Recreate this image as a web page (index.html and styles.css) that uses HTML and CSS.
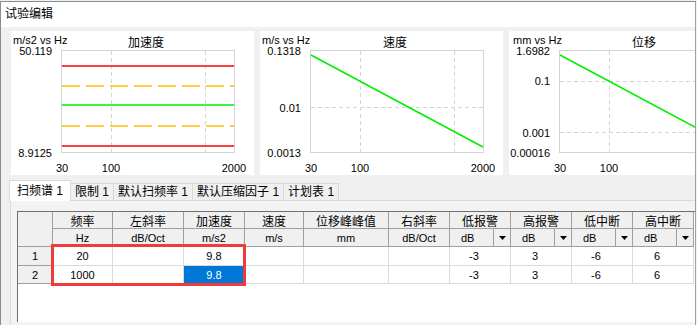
FILE: index.html
```html
<!DOCTYPE html>
<html lang="zh-CN">
<head>
    <meta charset="UTF-8">
    <meta name="viewport" content="width=device-width, initial-scale=1.0">
    <title>试验编辑</title>
    <link rel="stylesheet" href="styles.css">
</head>
<body>
<div class="window">
    <div class="titlebar">试验编辑</div>

    <div class="charts">
        <div class="chart">
            <svg width="243" height="144" viewBox="0 0 243 144">
                <text class="unit" x="2" y="13">m/s2 vs Hz</text>
                <text class="ttl" x="135" y="16">加速度</text>
                <rect class="frame" x="50.5" y="19.5" width="173" height="102"/>
                <line class="grid" x1="100.5" y1="20" x2="100.5" y2="121"/>
                <line class="grid" x1="194.5" y1="20" x2="194.5" y2="121"/>
                <line class="red" x1="51" y1="35" x2="223" y2="35"/>
                <line class="orange" x1="51" y1="55" x2="223" y2="55"/>
                <line class="green" x1="51" y1="74" x2="223" y2="74"/>
                <line class="orange" x1="51" y1="95" x2="223" y2="95"/>
                <line class="red" x1="51" y1="115" x2="223" y2="115"/>
                <text class="yl" x="41" y="24">50.119</text>
                <text class="yl" x="41" y="126">8.9125</text>
                <text class="xl" x="51" y="141">30</text>
                <text class="xl" x="100" y="141">100</text>
                <text class="xl" x="223" y="141">2000</text>
            </svg>
        </div>
        <div class="chart">
            <svg width="243" height="144" viewBox="0 0 243 144">
                <text class="unit" x="2" y="13">m/s vs Hz</text>
                <text class="ttl" x="135" y="16">速度</text>
                <rect class="frame" x="50.5" y="19.5" width="173" height="102"/>
                <line class="grid" x1="100.5" y1="20" x2="100.5" y2="121"/>
                <line class="grid" x1="194.5" y1="20" x2="194.5" y2="121"/>
                <line class="grid" x1="51" y1="76.5" x2="223" y2="76.5"/>
                <line class="curve" x1="51" y1="24" x2="223" y2="116"/>
                <text class="yl" x="41" y="24">0.1318</text>
                <text class="yl" x="41" y="81">0.01</text>
                <text class="yl" x="41" y="126">0.0013</text>
                <text class="xl" x="51" y="141">30</text>
                <text class="xl" x="100" y="141">100</text>
                <text class="xl" x="223" y="141">2000</text>
            </svg>
        </div>
        <div class="chart">
            <svg width="243" height="144" viewBox="0 0 243 144">
                <text class="unit" x="4" y="13">mm vs Hz</text>
                <text class="ttl" x="135" y="16">位移</text>
                <rect class="frame" x="50.5" y="19.5" width="173" height="102"/>
                <line class="grid" x1="100.5" y1="20" x2="100.5" y2="121"/>
                <line class="grid" x1="194.5" y1="20" x2="194.5" y2="121"/>
                <line class="grid" x1="51" y1="50.5" x2="223" y2="50.5"/>
                <line class="grid" x1="51" y1="101.5" x2="223" y2="101.5"/>
                <line class="curve" x1="51" y1="24" x2="223" y2="116"/>
                <text class="yl" x="41" y="24">1.6982</text>
                <text class="yl" x="41" y="54">0.1</text>
                <text class="yl" x="41" y="106">0.001</text>
                <text class="yl" x="41" y="126">0.00016</text>
                <text class="xl" x="51" y="141">30</text>
                <text class="xl" x="100" y="141">100</text>
            </svg>
        </div>
    </div>

    <div class="tab-strip">
        <div class="tab active">扫频谱 1</div>
        <div class="tab">限制 1</div>
        <div class="tab">默认扫频率 1</div>
        <div class="tab">默认压缩因子 1</div>
        <div class="tab">计划表 1</div>
    </div>
    <div class="tab-page">
        <div class="table">
            <div class="hc corner"></div>
            <div class="hc">频率</div>
            <div class="hc">左斜率</div>
            <div class="hc">加速度</div>
            <div class="hc">速度</div>
            <div class="hc">位移峰峰值</div>
            <div class="hc">右斜率</div>
            <div class="hc">低报警</div>
            <div class="hc">高报警</div>
            <div class="hc">低中断</div>
            <div class="hc">高中断</div>

            <div class="hc u">Hz</div>
            <div class="hc u">dB/Oct</div>
            <div class="hc u">m/s2</div>
            <div class="hc u">m/s</div>
            <div class="hc u">mm</div>
            <div class="hc u">dB/Oct</div>
            <div class="hc u dd"><span>dB</span><i class="dd-btn"><svg width="7" height="4"><path d="M0 0h7L3.5 4z"/></svg></i></div>
            <div class="hc u dd"><span>dB</span><i class="dd-btn"><svg width="7" height="4"><path d="M0 0h7L3.5 4z"/></svg></i></div>
            <div class="hc u dd"><span>dB</span><i class="dd-btn"><svg width="7" height="4"><path d="M0 0h7L3.5 4z"/></svg></i></div>
            <div class="hc u dd"><span>dB</span><i class="dd-btn"><svg width="7" height="4"><path d="M0 0h7L3.5 4z"/></svg></i></div>

            <div class="hc rh">1</div>
            <div class="c">20</div>
            <div class="c"></div>
            <div class="c">9.8</div>
            <div class="c"></div>
            <div class="c"></div>
            <div class="c"></div>
            <div class="c lim">-3</div>
            <div class="c lim">3</div>
            <div class="c lim">-6</div>
            <div class="c lim">6</div>

            <div class="hc rh">2</div>
            <div class="c">1000</div>
            <div class="c"></div>
            <div class="c sel">9.8</div>
            <div class="c"></div>
            <div class="c"></div>
            <div class="c"></div>
            <div class="c lim">-3</div>
            <div class="c lim">3</div>
            <div class="c lim">-6</div>
            <div class="c lim">6</div>

            <div class="mark"></div>
        </div>
    </div>
</div>
</body>
</html>
```

FILE: styles.css
```css
body { margin: 0; background: #f0f0f0; font-family: "Liberation Sans", "Noto Sans CJK SC", sans-serif; color: #000; }
.window { box-sizing: border-box; width: 696px; height: 324px; margin-top: 1px; background: #f0f0f0; border-left: 1px solid #8c8c8c; border-top: 1px solid #8c8c8c; border-right: 1px solid #a0a0a0; overflow: hidden; }
.titlebar { height: 25px; line-height: 25px; padding-left: 4px; background: #fff; font-size: 12px; }

/* charts */
.charts { display: flex; gap: 6px; padding: 4px 0 0 10px; overflow: hidden; }
.chart { flex: 0 0 243px; height: 144px; background: #fff; }
.chart svg { display: block; }
.chart text { font-family: "Liberation Sans", "Noto Sans CJK SC", sans-serif; font-size: 11px; fill: #000; }
.chart .ttl { font-size: 12px; text-anchor: middle; }
.chart .yl { text-anchor: end; }
.chart .xl { text-anchor: middle; }
.frame { fill: none; stroke: #d4d4d4; }
.grid { stroke: #d4d4d4; stroke-dasharray: 4 3; }
.red { stroke: #ff0000; stroke-width: 1.6; }
.orange { stroke: #ffc000; stroke-width: 1.6; stroke-dasharray: 18 6; }
.green { stroke: #00ee00; stroke-width: 1.6; }
.curve { stroke: #00ee00; stroke-width: 1.5; }

/* tabs */
.tab-strip { display: flex; align-items: flex-end; height: 20px; margin-top: 5px; padding-left: 8px; }
.tab { box-sizing: border-box; height: 17px; padding: 0 4px; font-size: 12px; line-height: 16px; background: #f0f0f0; border: 1px solid #d9d9d9; border-bottom: none; margin-left: -1px; white-space: nowrap; }
.tab.active { height: 21px; line-height: 20px; margin-left: 0; margin-bottom: -1px; padding: 0 7px; background: #fff; position: relative; z-index: 1; }
.tab-page { margin-left: 9px; padding: 10px 0 0 6px; height: 130px; background: #f3f3f3; border-top: 1px solid #d9d9d9; border-left: 1px solid #d9d9d9; }

/* grid */
.table { position: relative; box-sizing: border-box; height: 111px; display: grid; grid-template-columns: 35px 60px 71px 61px 59px 85px 61px 61px 61px 61px 61px; grid-template-rows: 17px 18px 19px 18px; align-content: start; background: #fff; border-left: 1px solid #6e6e6e; border-top: 1px solid #6e6e6e; }
.hc, .c { box-sizing: border-box; display: flex; align-items: center; justify-content: center; white-space: nowrap; }
.hc { background: #f0f0f0; font-size: 12px; border-right: 1px solid #a0a0a0; border-bottom: 1px solid #a0a0a0; }
.hc.corner { grid-row: span 2; }
.hc.u { font-size: 11px; }
.hc.rh { font-size: 11px; }
.hc.dd { justify-content: space-between; }
.dd span { padding-left: 11px; }
.dd-btn { display: flex; align-items: center; justify-content: center; width: 16px; height: 100%; border-left: 1px solid #a0a0a0; }
.dd-btn path { fill: #000; }
.c { font-size: 11px; border-right: 1px solid #dadada; border-bottom: 1px solid #dadada; }
.c.lim { padding-right: 12px; }
.c.sel { background: #0078d7; color: #fff; }
.mark { position: absolute; left: 33px; top: 32px; width: 195px; height: 42px; box-sizing: border-box; border: 3px solid #ef3b3b; pointer-events: none; }
```
